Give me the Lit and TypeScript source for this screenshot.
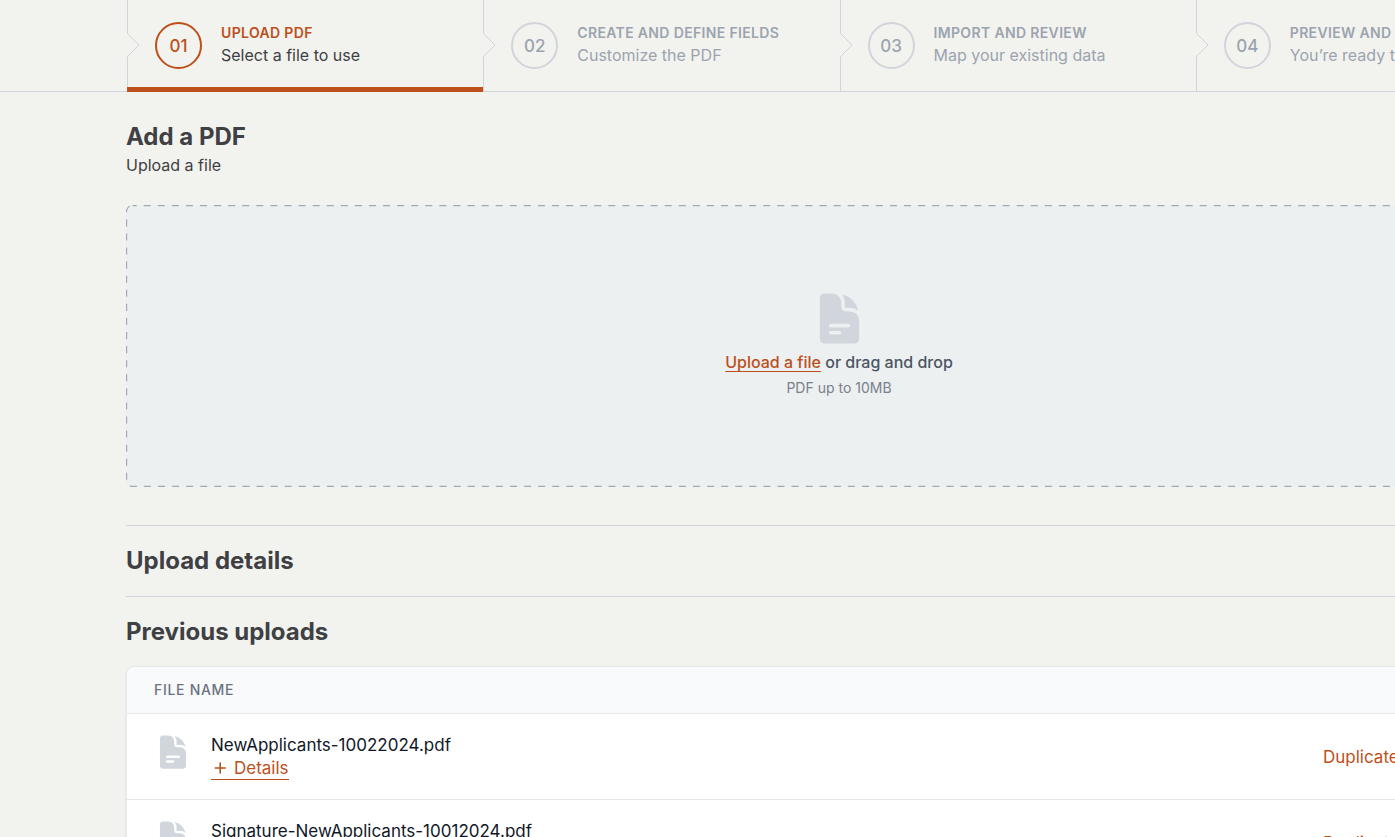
import { LitElement, html, css } from "lit";
import { customElement, property } from "lit/decorators.js";
import { classMap } from "lit/directives/class-map.js";

interface Step {
  number: string;
  title: string;
  description: string;
}

const STEPS: Step[] = [
  { number: "01", title: "Upload PDF", description: "Select a file to use" },
  { number: "02", title: "Create and define fields", description: "Customize the PDF" },
  { number: "03", title: "Import and review", description: "Map your existing data" },
  { number: "04", title: "Preview and finish", description: "You’re ready to go" },
];

const FILES = ["NewApplicants-10022024.pdf", "Signature-NewApplicants-10012024.pdf"];

@customElement("document-icon")
class DocumentIcon extends LitElement {
  static styles = css`
    :host {
      display: block;
      color: #d1d5dc;
    }
    .glyph {
      display: block;
      width: 100%;
      height: 100%;
    }
  `;

  render() {
    return html`<svg class="glyph" viewBox="0 0 24 24" fill="currentColor" aria-hidden="true">
      <path
        fill-rule="evenodd"
        d="M5.625 1.5c-1.036 0-1.875.84-1.875 1.875v17.25c0 1.035.84 1.875 1.875 1.875h12.75c1.035 0 1.875-.84 1.875-1.875V12.75A3.75 3.75 0 0 0 16.5 9h-1.875a1.875 1.875 0 0 1-1.875-1.875V5.25A3.75 3.75 0 0 0 9 1.5H5.625ZM7.5 15a.75.75 0 0 1 .75-.75h7.5a.75.75 0 0 1 0 1.5h-7.5A.75.75 0 0 1 7.5 15Zm.75 2.25a.75.75 0 0 0 0 1.5H12a.75.75 0 0 0 0-1.5H8.25Z"
      />
      <path
        d="M12.971 1.816A5.23 5.23 0 0 1 14.25 5.25v1.875c0 .207.168.375.375.375H16.5a5.23 5.23 0 0 1 3.434 1.279 9.768 9.768 0 0 0-6.963-6.963Z"
      />
    </svg>`;
  }
}

@customElement("step-bar")
class StepBar extends LitElement {
  @property({ type: Number }) current = 0;

  static styles = css`
    :host {
      display: block;
      border-bottom: 1px solid #d1d5db;
      padding-left: 127px;
    }
    .steps {
      list-style: none;
      margin: 0;
      padding: 0;
      display: grid;
      grid-template-columns: repeat(4, 1fr);
    }
    .step {
      position: relative;
      display: flex;
      align-items: center;
      height: 91px;
      color: #9ca3af;
    }
    .divider {
      flex: none;
      width: 13px;
      height: 91px;
      color: #d1d5db;
    }
    .number {
      flex: none;
      box-sizing: border-box;
      display: grid;
      place-items: center;
      width: 47px;
      height: 47px;
      margin: 0 19px 0 15px;
      border: 2px solid #d1d5db;
      border-radius: 50%;
      font-size: 17px;
      line-height: 20px;
      font-weight: 500;
    }
    .text {
      padding-bottom: 2px;
    }
    .title {
      margin: 0;
      font-size: 14px;
      line-height: 20px;
      font-weight: 600;
      letter-spacing: 0.025em;
      text-transform: uppercase;
      white-space: nowrap;
    }
    .description {
      margin: 0;
      font-size: 16px;
      line-height: 24px;
      white-space: nowrap;
    }
    .active .number {
      border-color: #bd4f1b;
      color: #bd4f1b;
    }
    .active .title {
      color: #bd4f1b;
    }
    .active .description {
      color: #3f4043;
    }
    .active::after {
      content: "";
      position: absolute;
      left: 0;
      right: 0;
      bottom: -1px;
      height: 5px;
      background: #bd4f1b;
    }
  `;

  render() {
    return html`<ol class="steps">
      ${STEPS.map(
        (step, i) => html`<li class=${classMap({ step: true, active: i === this.current })}>
          <svg class="divider" viewBox="0 0 13 91" fill="none" stroke="currentColor" aria-hidden="true">
            <path d="M.5 0V33.5L12 45 .5 56.5V91" />
          </svg>
          <span class="number">${step.number}</span>
          <div class="text">
            <p class="title">${step.title}</p>
            <p class="description">${step.description}</p>
          </div>
        </li>`
      )}
    </ol>`;
  }
}

@customElement("drop-zone")
class DropZone extends LitElement {
  static styles = css`
    :host {
      position: relative;
      display: flex;
      flex-direction: column;
      align-items: center;
      justify-content: center;
      box-sizing: border-box;
      min-height: 282px;
      padding-bottom: 2px;
      border-radius: 7px;
      background: #ecf0f0;
    }
    .outline {
      position: absolute;
      inset: 0;
      width: 100%;
      height: 100%;
      pointer-events: none;
    }
    .icon {
      width: 57px;
      height: 57px;
    }
    .prompt {
      margin: 3px 0 2px;
      font-size: 16px;
      line-height: 24px;
      font-weight: 500;
      color: #4b5563;
    }
    .pick {
      color: #bd4f1b;
      cursor: pointer;
      text-decoration: underline;
      text-decoration-thickness: 1px;
      text-decoration-skip-ink: none;
      text-underline-offset: 3px;
    }
    .file {
      position: absolute;
      width: 1px;
      height: 1px;
      opacity: 0;
    }
    .hint {
      margin: 0;
      font-size: 14px;
      line-height: 24px;
      color: #7a808c;
    }
  `;

  render() {
    return html`
      <svg class="outline" aria-hidden="true">
        <rect
          x="0.6"
          y="0.6"
          width="99.92%"
          height="99.6%"
          rx="6"
          fill="none"
          stroke="#a3a9b4"
          stroke-width="1.2"
          stroke-dasharray="7.04 7.04"
          stroke-dashoffset="3"
        />
      </svg>
      <document-icon class="icon"></document-icon>
      <p class="prompt">
        <label class="pick" for="file">Upload a file</label> or drag and drop
      </p>
      <input class="file" id="file" type="file" accept="application/pdf" />
      <p class="hint">PDF up to 10MB</p>
    `;
  }
}

@customElement("upload-table")
class UploadTable extends LitElement {
  static styles = css`
    :host {
      display: block;
      overflow: hidden;
      border: 1px solid #e5e7eb;
      border-radius: 9px;
      background: #ffffff;
      box-shadow: 0 1px 3px rgba(0, 0, 0, 0.08);
    }
    .table {
      width: 100%;
      border-collapse: collapse;
      text-align: left;
    }
    .head {
      padding: 11px 27px 12px;
      background: #f9fafb;
      color: #6b7280;
      font-size: 14px;
      line-height: 23px;
      font-weight: 500;
      letter-spacing: 0.05em;
      text-transform: uppercase;
    }
    .row {
      border-top: 1px solid #e5e7eb;
    }
    .cell {
      padding: 19px 27px;
    }
    .actions {
      width: 201px;
    }
    .entry {
      display: flex;
      gap: 19px;
    }
    .icon {
      width: 38px;
      height: 38px;
    }
    .name {
      margin: 0;
      font-size: 17px;
      line-height: 24px;
      color: #111827;
    }
    .action {
      display: block;
      margin: 0;
      padding: 0;
      border: 0;
      background: none;
      font: inherit;
      font-size: 17px;
      line-height: 22px;
      color: #bd4f1b;
      cursor: pointer;
    }
    .details {
      display: flex;
      align-items: center;
      gap: 5px;
      border-bottom: 1px solid #bd4f1b;
    }
    .plus {
      width: 18px;
      height: 18px;
    }
  `;

  render() {
    return html`<table class="table">
      <thead>
        <tr>
          <th class="head" scope="col">File name</th>
          <td class="head"></td>
        </tr>
      </thead>
      <tbody>
        ${FILES.map(
          (name) => html`<tr class="row">
            <td class="cell">
              <div class="entry">
                <document-icon class="icon"></document-icon>
                <div>
                  <p class="name">${name}</p>
                  <button class="action details" type="button">
                    <svg class="plus" viewBox="0 0 18 18" fill="none" stroke="currentColor" stroke-width="1.6" stroke-linecap="round" aria-hidden="true">
                      <path d="M9.2 4v10M4.2 9h10" />
                    </svg>
                    Details
                  </button>
                </div>
              </div>
            </td>
            <td class="cell actions">
              <button class="action" type="button">Duplicate</button>
            </td>
          </tr>`
        )}
      </tbody>
    </table>`;
  }
}

@customElement("app-root")
class AppRoot extends LitElement {
  static styles = css`
    :host {
      display: block;
      height: 100vh;
      overflow: auto;
      scrollbar-width: none;
      background: #f2f3ee;
      font-family: Inter, "Liberation Sans", sans-serif;
      color: #3f4043;
    }
    .page {
      min-width: 1552px;
    }
    .content {
      padding: 31px 0 31px 126px;
    }
    .heading {
      margin: 0;
      font-size: 24px;
      line-height: 28px;
      font-weight: 700;
    }
    .lead {
      margin: 0 0 26px;
      font-size: 16px;
      line-height: 28px;
    }
    .section {
      padding: 21px 0;
      border-top: 1px solid #d1d5db;
    }
    .first {
      margin-top: 38px;
    }
    .table {
      margin-top: 20px;
    }
  `;

  render() {
    return html`<div class="page">
      <step-bar .current=${0}></step-bar>
      <main class="content">
        <h2 class="heading">Add a PDF</h2>
        <p class="lead">Upload a file</p>
        <drop-zone></drop-zone>
        <section class="section first">
          <h2 class="heading">Upload details</h2>
        </section>
        <section class="section">
          <h2 class="heading">Previous uploads</h2>
          <upload-table class="table"></upload-table>
        </section>
      </main>
    </div>`;
  }
}
